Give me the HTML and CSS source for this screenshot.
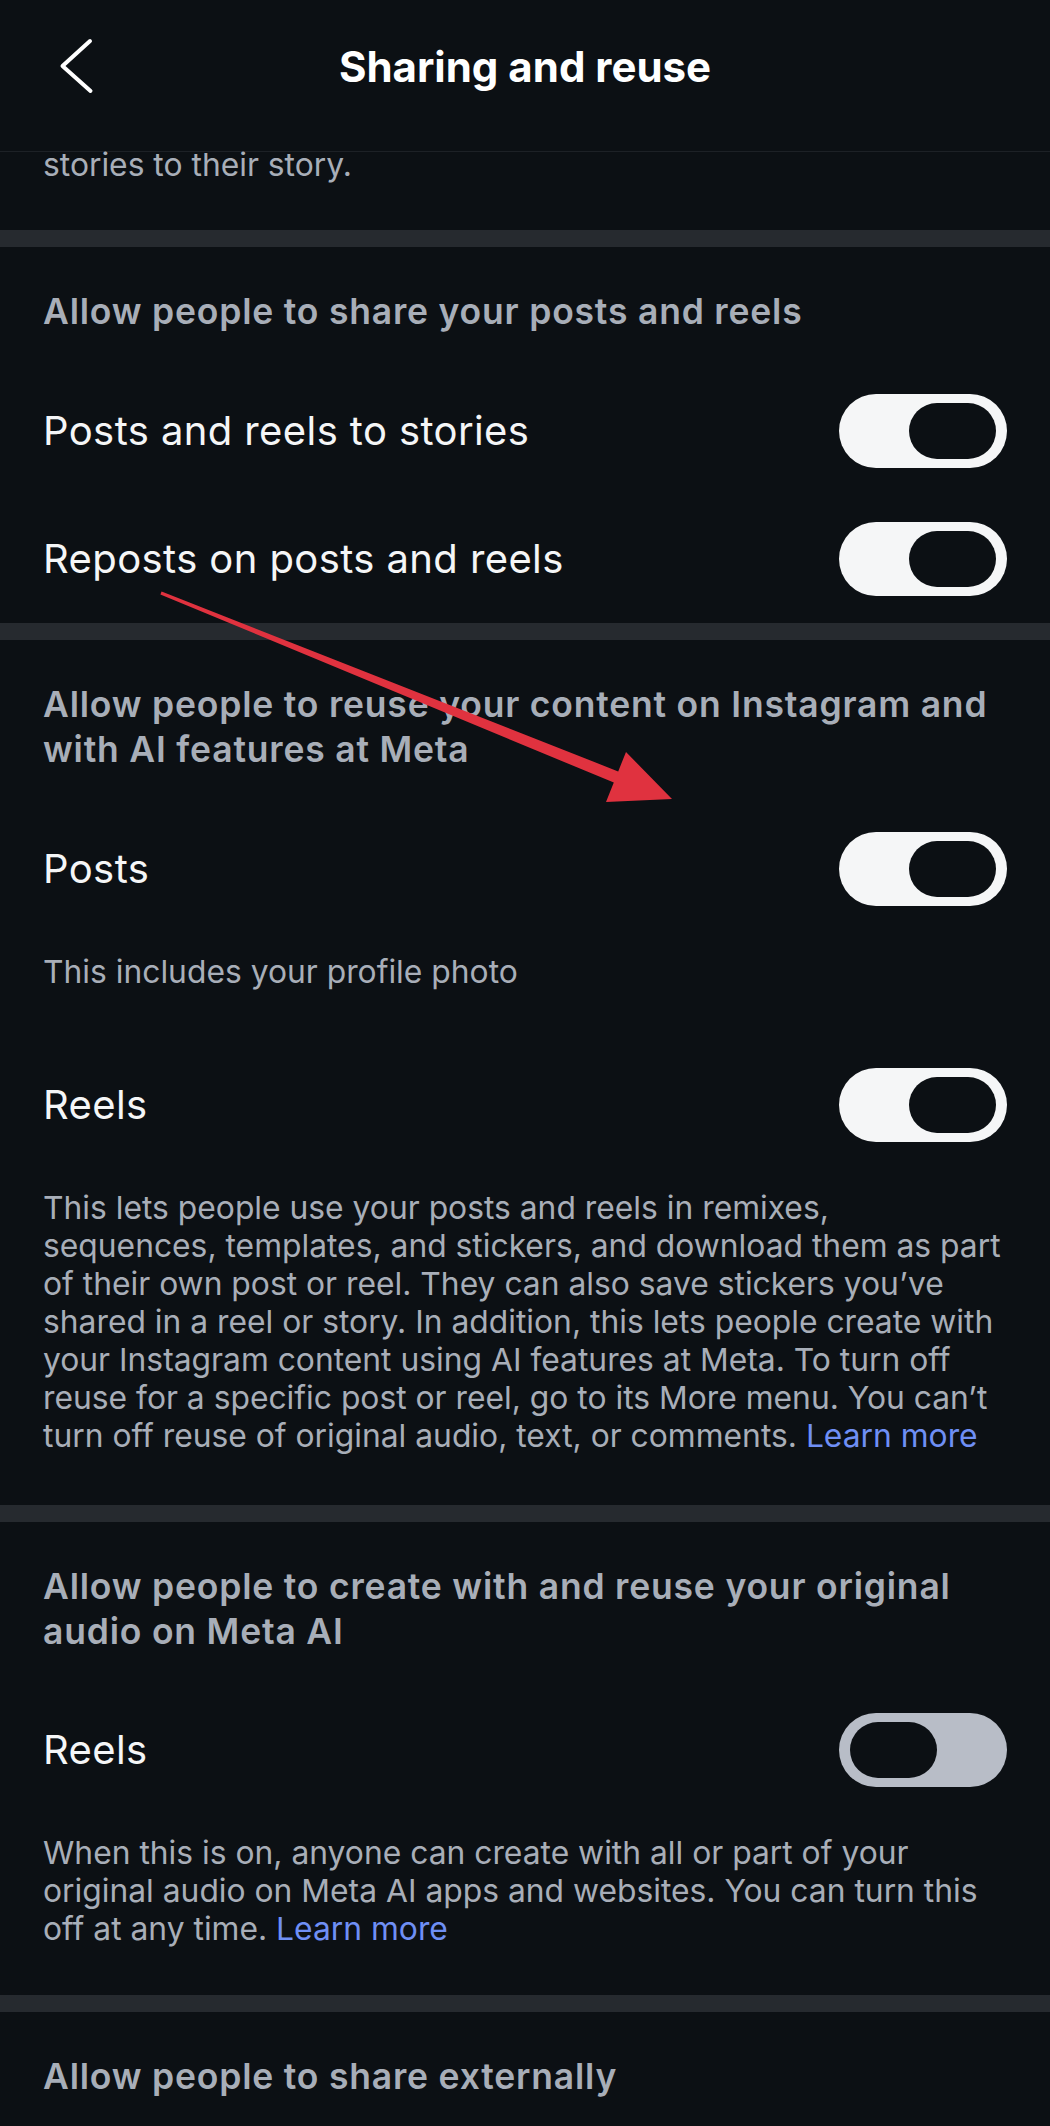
FILE: index.html
```html
<!DOCTYPE html>
<html lang="en">
<head>
<meta charset="utf-8">
<title>Sharing and reuse</title>
<link rel="stylesheet" href="styles.css">
</head>
<body>
  <header class="topbar">
    <button class="back" type="button" aria-label="Back">
      <svg width="50" height="60" viewBox="0 0 50 60" aria-hidden="true">
        <path d="M40 4 L12.5 29 L40.5 54" fill="none" stroke="#ffffff" stroke-width="4" stroke-linecap="round" stroke-linejoin="round"/>
      </svg>
    </button>
    <h1 class="title">Sharing and reuse</h1>
    <span class="spacer"></span>
  </header>

  <main class="settings">
    <p class="tail">stories to their story.</p>

    <div class="band"></div>

    <section class="group">
      <h2 class="group-title">Allow people to share your posts and reels</h2>
      <div class="row">
        <span class="label">Posts and reels to stories</span>
        <span class="switch is-on" role="switch" aria-checked="true"><span class="knob"></span></span>
      </div>
      <div class="row">
        <span class="label">Reposts on posts and reels</span>
        <span class="switch is-on" role="switch" aria-checked="true"><span class="knob"></span></span>
      </div>
    </section>

    <div class="band"></div>

    <section class="group">
      <h2 class="group-title">Allow people to reuse your content on Instagram and with AI features at Meta</h2>
      <div class="row">
        <span class="label">Posts</span>
        <span class="switch is-on" role="switch" aria-checked="true"><span class="knob"></span></span>
      </div>
      <p class="note">This includes your profile photo</p>
      <div class="row">
        <span class="label">Reels</span>
        <span class="switch is-on" role="switch" aria-checked="true"><span class="knob"></span></span>
      </div>
      <p class="note">This lets people use your posts and reels in remixes,<br>sequences, templates, and stickers, and download them as part<br>of their own post or reel. They can also save stickers you’ve<br>shared in a reel or story. In addition, this lets people create with<br>your Instagram content using AI features at Meta. To turn off<br>reuse for a specific post or reel, go to its More menu. You can’t<br>turn off reuse of original audio, text, or comments. <a href="#">Learn more</a></p>
    </section>

    <div class="band"></div>

    <section class="group group-audio">
      <h2 class="group-title">Allow people to create with and reuse your original audio on Meta AI</h2>
      <div class="row">
        <span class="label">Reels</span>
        <span class="switch" role="switch" aria-checked="false"><span class="knob"></span></span>
      </div>
      <p class="note">When this is on, anyone can create with all or part of your<br>original audio on Meta AI apps and websites. You can turn this<br>off at any time. <a href="#">Learn more</a></p>
    </section>

    <div class="band"></div>

    <section class="group">
      <h2 class="group-title">Allow people to share externally</h2>
    </section>
  </main>

  <!-- red annotation arrow drawn over the list -->
  <svg class="annotation" width="1050" height="2126" viewBox="0 0 1050 2126" aria-hidden="true">
    <polygon points="161.6,591.6 618.2,771.4 626,752 672,799 606,802 613.8,782.6 160.4,594.4" fill="#e0323f"/>
  </svg>
</body>
</html>
```
FILE: styles.css
```css
* {
  box-sizing: border-box;
}

html {
  background: #0c1014;
}

body {
  margin: 0;
  width: 1050px;
  min-height: 2126px;
  position: relative;
  background: #0c1014;
  color: #f5f6f7;
  font-family: Inter, "Noto Sans", sans-serif;
}

/* navigation bar */
.topbar {
  height: 152px;
  padding-bottom: 17px;
  border-bottom: 1px solid #1d2126;
  display: grid;
  grid-template-columns: 1fr auto 1fr;
  align-items: center;
}

.back {
  justify-self: start;
  margin-left: 50px;
  padding: 0;
  border: 0;
  background: none;
  cursor: pointer;
}

.back svg {
  display: block;
}

.title {
  margin: 0;
  font-size: 42px;
  line-height: 50px;
  font-weight: 700;
  color: #ffffff;
}

/* scrolled-off text from the previous block */
.tail {
  margin: 0;
  padding: 0 43px 52px;
  font-size: 31.8px;
  line-height: 26px;
  color: #a8aeb8;
}

.band {
  height: 17px;
  background: #262a2f;
}

.group {
  padding: 42px 43px 0;
}

.group-title {
  margin: 0 0 33px;
  font-size: 35.5px;
  line-height: 45px;
  font-weight: 600;
  letter-spacing: 0.8px;
  color: #a8aeb8;
}

.row {
  display: flex;
  align-items: center;
  justify-content: space-between;
  padding: 27px 0;
}

.group-audio .row {
  padding: 26px 0 27px;
}

.label {
  font-size: 40px;
  line-height: 48px;
  letter-spacing: 0.4px;
  color: #f5f6f7;
}

.note {
  margin: 20px 0 50px;
  font-size: 31.8px;
  line-height: 38px;
  color: #a8aeb8;
  white-space: nowrap;
}

.group-audio .note {
  margin-bottom: 47px;
}

.note a {
  color: #6f8ff5;
  text-decoration: none;
}

/* toggle switch */
.switch {
  width: 168px;
  height: 74px;
  padding: 9px 11px;
  border-radius: 37px;
  background: #b8bdc7;
  display: flex;
  justify-content: flex-start;
  flex-shrink: 0;
}

.switch.is-on {
  background: #f5f6f7;
  justify-content: flex-end;
}

.knob {
  width: 87px;
  height: 56px;
  border-radius: 28px;
  background: #0c1014;
}

.annotation {
  position: absolute;
  top: 0;
  left: 0;
  pointer-events: none;
}
```
